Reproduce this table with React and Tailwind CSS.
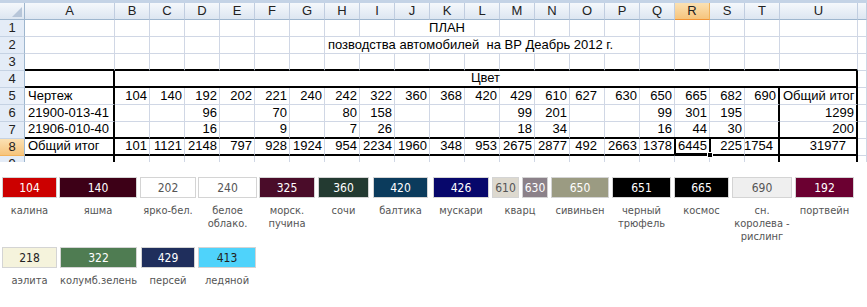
import clsx from 'clsx'

const LETTERS = ['A', 'B', 'C', 'D', 'E', 'F', 'G', 'H', 'I', 'J', 'K', 'L', 'M', 'N', 'O', 'P', 'Q', 'R', 'S', 'T', 'U']
const NUM_COLS = LETTERS.slice(1, 20)

const codes = [104, 140, 192, 202, 221, 240, 242, 322, 360, 368, 420, 429, 610, 627, 630, 650, 665, 682, 690]
const row6 = { D: 96, F: 70, H: 80, I: 158, M: 99, N: 201, Q: 99, R: 301, S: 195 }
const row7 = { D: 16, F: 9, H: 7, I: 26, M: 18, N: 34, Q: 16, R: 44, S: 30 }
const totals = [101, 1121, 2148, 797, 928, 1924, 954, 2234, 1960, 348, 953, 2675, 2877, 492, 2663, 1378, 6445, 225, 1754]

const swatchesTop = [
  { code: '104', label: 'калина', ml: 'ml-0', w: 'w-[55px]', bg: 'bg-[#cc0000]', fg: 'text-white' },
  { code: '140', label: 'яшма', ml: 'ml-[2px]', w: 'w-[78px]', bg: 'bg-[#3d0017]', fg: 'text-white' },
  { code: '202', label: 'ярко-бел.', ml: 'ml-[3px]', w: 'w-[56px]', bg: 'bg-white', fg: 'text-[#555]' },
  { code: '240', label: ['белое', 'облако.'], ml: 'ml-[2px]', w: 'w-[59px]', bg: 'bg-white', fg: 'text-[#555]' },
  { code: '325', label: ['морск.', 'пучина'], ml: 'ml-[2px]', w: 'w-[56px]', bg: 'bg-[#4a0c29]', fg: 'text-white' },
  { code: '360', label: 'сочи', ml: 'ml-[3px]', w: 'w-[51px]', bg: 'bg-[#233a31]', fg: 'text-white' },
  { code: '420', label: 'балтика', ml: 'ml-[4px]', w: 'w-[55px]', bg: 'bg-[#0b3b5c]', fg: 'text-white' },
  { code: '426', label: 'мускари', ml: 'ml-[5px]', w: 'w-[56px]', bg: 'bg-[#07076b]', fg: 'text-white' },
]

const swatchesTopEnd = [
  { code: '650', label: 'сивиньен', ml: 'ml-[3px]', w: 'w-[58px]', bg: 'bg-[#9b9b82]', fg: 'text-white' },
  { code: '651', label: ['черный', 'трюфель'], ml: 'ml-[3px]', w: 'w-[59px]', bg: 'bg-black', fg: 'text-white' },
  { code: '665', label: 'космос', ml: 'ml-[3px]', w: 'w-[55px]', bg: 'bg-black', fg: 'text-white' },
  { code: '690', label: ['сн.', 'королева -', 'рислинг'], ml: 'ml-[3px]', w: 'w-[60px]', bg: 'bg-[#efefef]', fg: 'text-[#555]' },
  { code: '192', label: 'портвейн', ml: 'ml-[3px]', w: 'w-[59px]', bg: 'bg-[#6b0031]', fg: 'text-white' },
]

const swatchesBottom = [
  { code: '218', label: 'аэлита', ml: 'ml-0', w: 'w-[55px]', bg: 'bg-[#f5f3dc]', fg: 'text-[#222]' },
  { code: '322', label: 'колумб.зелень', ml: 'ml-[3px]', w: 'w-[77px]', bg: 'bg-[#4f7c52]', fg: 'text-white' },
  { code: '429', label: 'персей', ml: 'ml-[4px]', w: 'w-[54px]', bg: 'bg-[#1f2e5c]', fg: 'text-white' },
  { code: '413', label: 'ледяной', ml: 'ml-[3px]', w: 'w-[58px]', bg: 'bg-[#4fd3fb]', fg: 'text-[#222]' },
]

function Cell({ children, className, align = 'right' }) {
  return (
    <div
      className={clsx(
        'flex h-[17px] items-end whitespace-pre border-r border-b border-[#d0d7e5] text-[13px] leading-[17px] text-black',
        align === 'right' && 'justify-end pr-[2px]',
        align === 'left' && 'justify-start pl-[3px]',
        align === 'center' && 'justify-center',
        className
      )}
    >
      {children}
    </div>
  )
}

function RowHead({ n, active }) {
  return (
    <div
      className={clsx(
        'flex h-[17px] items-center justify-center border-r border-b border-r-[#9eb6ce] text-[13px] text-[#222]',
        active
          ? 'border-b-[#f2b35c] bg-linear-to-b from-[#fbe1b3] to-[#f6c47c]'
          : 'border-b-[#c5d2e3] bg-[#e4ecf7]'
      )}
    >
      {n}
    </div>
  )
}

function ColHead({ letter }) {
  const active = letter === 'R'
  return (
    <div
      className={clsx(
        'flex h-[17px] items-center justify-center border-r border-b text-[13px] text-[#222]',
        active
          ? 'border-r-[#f2b35c] border-b-[#f29436] bg-linear-to-b from-[#fbe1b3] to-[#f6c47c]'
          : 'border-r-[#c0cde0] border-b-[#9eb6ce] bg-linear-to-b from-[#f5f8fc] to-[#dde6f1]'
      )}
    >
      {letter}
    </div>
  )
}

function Sheet() {
  const edgeRight = (col, row) =>
    (col === 'A' && row >= 4) || (col === 'U' && row >= 4) || (col === 'T' && row >= 5)

  const dataRow = (row, values, first, opts = {}) => (
    <>
      <RowHead n={row} active={row === 8} />
      <Cell
        align="left"
        className={clsx('border-r-2 border-r-black', opts.thickBottom && 'border-b-2 border-b-black')}
      >
        {first}
      </Cell>
      {NUM_COLS.map((col, i) => (
        <Cell
          key={col}
          className={clsx(
            edgeRight(col, row) && 'border-r-2 border-r-black',
            opts.thickBottom && 'border-b-2 border-b-black',
            col === 'O' && 'pr-[7px]',
            col === 'T' && row === 8 && 'pr-[5px]',
            col === 'R' && row === 8 && 'relative'
          )}
        >
          {values[i]}
          {col === 'R' && row === 8 && (
            <>
              <span className="absolute -top-[2px] -right-[2px] -bottom-[1px] -left-[1px] border-2 border-black" />
              <span className="absolute -right-[4px] -bottom-[4px] size-[6px] border border-white bg-black" />
            </>
          )}
        </Cell>
      ))}
      <Cell
        align={opts.uLeft ? 'left' : 'right'}
        className={clsx(
          'border-r-2 border-r-black',
          opts.thickBottom && 'border-b-2 border-b-black',
          row === 8 && 'pr-[10px]'
        )}
      >
        {opts.u}
      </Cell>
      <Cell />
    </>
  )

  return (
    <div className="h-[162px] overflow-hidden bg-white">
      <div className="h-[3px] bg-[#c4d3e6]" />
      <div className="grid grid-cols-[25px_90px_repeat(19,35px)_78px_9px]">
        {/* column headers */}
        <div className="relative h-[17px] border-r border-b border-r-[#9eb6ce] border-b-[#9eb6ce] bg-linear-to-b from-[#f5f8fc] to-[#dde6f1]">
          <svg className="absolute right-[2px] bottom-[2px]" width="10" height="10" viewBox="0 0 10 10">
            <path d="M10 0 L10 10 L0 10 Z" fill="#b7c6d9" />
          </svg>
        </div>
        {LETTERS.map((l) => (
          <ColHead key={l} letter={l} />
        ))}
        <ColHead letter="" />

        {/* row 1 */}
        <RowHead n={1} />
        <Cell />
        {LETTERS.slice(1, 9).map((l) => (
          <Cell key={l} />
        ))}
        <Cell align="center" className="col-span-3">
          ПЛАН
        </Cell>
        {LETTERS.slice(12).map((l) => (
          <Cell key={l} />
        ))}
        <Cell />

        {/* row 2 */}
        <RowHead n={2} />
        <Cell />
        {LETTERS.slice(1, 7).map((l) => (
          <Cell key={l} />
        ))}
        <Cell align="left" className="col-span-9">
          {'позводства автомобилей  на ВР Деабрь 2012 г.'}
        </Cell>
        {LETTERS.slice(16).map((l) => (
          <Cell key={l} />
        ))}
        <Cell />

        {/* row 3 */}
        <RowHead n={3} />
        {LETTERS.map((l) => (
          <Cell key={l} className="border-b-2 border-b-black" />
        ))}
        <Cell />

        {/* row 4 */}
        <RowHead n={4} />
        <Cell className="border-r-2 border-b-2 border-r-black border-b-black" />
        <Cell align="center" className="col-span-20 border-r-2 border-b-2 border-r-black border-b-black">
          Цвет
        </Cell>
        <Cell />

        {dataRow(5, codes, 'Чертеж', { u: 'Общий итог', uLeft: true })}
        {dataRow(6, NUM_COLS.map((c) => row6[c]), '21900-013-41', { u: 1299 })}
        {dataRow(7, NUM_COLS.map((c) => row7[c]), '21906-010-40', { u: 200, thickBottom: true })}
        {dataRow(8, totals, 'Общий итог', { u: 31977, thickBottom: true })}
        {dataRow(9, [], '', {})}
      </div>
    </div>
  )
}

function Swatch({ s, className }) {
  return (
    <div
      className={clsx(
        'flex h-[21px] items-center justify-center border border-[#d4d4d4] text-[12px]',
        s.bg,
        s.fg,
        className
      )}
    >
      {s.code}
    </div>
  )
}

function Label({ text }) {
  const lines = Array.isArray(text) ? text : [text]
  return (
    <div className="mt-[6px] text-center text-[11px] leading-[13px] whitespace-nowrap text-[#555]">
      {lines.map((line) => (
        <div key={line}>{line}</div>
      ))}
    </div>
  )
}

function Item({ s }) {
  return (
    <div className={clsx('flex shrink-0 flex-col', s.ml, s.w)}>
      <Swatch s={s} />
      <Label text={s.label} />
    </div>
  )
}

export default function App() {
  return (
    <div className="h-[307px] w-[867px] overflow-hidden bg-white font-['Liberation_Sans',Arial,sans-serif]">
      <Sheet />
      <div className="px-[2px] pt-[15px] font-['DejaVu_Sans_Condensed','DejaVu_Sans',sans-serif]">
        <div className="flex items-start">
          {swatchesTop.map((s) => (
            <Item key={s.code} s={s} />
          ))}
          <div className="ml-[3px] flex w-[56px] shrink-0 flex-col">
            <div className="flex gap-[3px]">
              <Swatch s={{ code: '610', bg: 'bg-[#ddd9cf]', fg: 'text-[#555]' }} className="w-[27px]" />
              <Swatch s={{ code: '630', bg: 'bg-[#8b8189]', fg: 'text-white' }} className="w-[26px]" />
            </div>
            <Label text="кварц" />
          </div>
          {swatchesTopEnd.map((s) => (
            <Item key={s.code} s={s} />
          ))}
        </div>
        <div className="mt-[4px] flex items-start">
          {swatchesBottom.map((s) => (
            <Item key={s.code} s={s} />
          ))}
        </div>
      </div>
    </div>
  )
}
